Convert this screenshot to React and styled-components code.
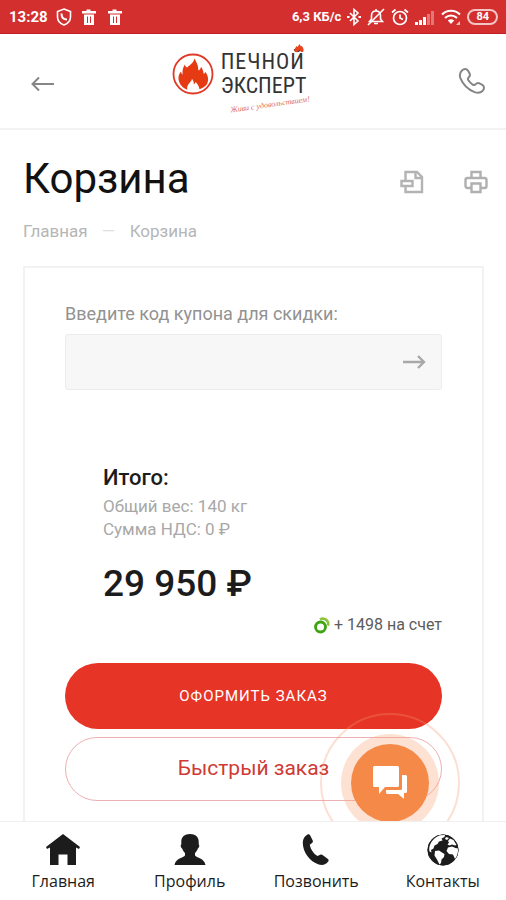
import { useState } from "react";
import styled, { createGlobalStyle } from "styled-components";

const tabs = [
  { id: "home", label: "Главная", Icon: HomeIcon },
  { id: "profile", label: "Профиль", Icon: PersonIcon },
  { id: "call", label: "Позвонить", Icon: CallIcon },
  { id: "contacts", label: "Контакты", Icon: GlobeIcon },
];

function App() {
  const [coupon, setCoupon] = useState("");

  return (
    <>
      <GlobalStyle />
      <Screen>
        <StatusBar />
        <Header>
          <IconButton type="button" aria-label="Назад">
            <svg width="23" height="20" viewBox="0 0 23 20" fill="none" stroke="#868686" strokeWidth="2">
              <path d="M23 13H1.500M8 6.500 1.500 13 8 19.500" />
            </svg>
          </IconButton>
          <Logo />
          <IconButton type="button" aria-label="Позвонить">
            <svg width="28" height="28" viewBox="0 0 28 28" fill="none" stroke="#858585" strokeWidth="2" strokeLinejoin="round">
              <path d="M4.200 3.200c2-1.900 4.600-1.600 5.900.5l1.400 2.500c.9 1.700.5 3-.7 4.100-1 .9-1.100 1.900-.4 3 1.100 1.800 2.500 3.200 4.300 4.300 1.100.7 2.100.6 3-.4 1.100-1.200 2.500-1.500 4.100-.7l2.500 1.400c2.100 1.300 2.300 3.800.5 5.800-2 2-4.900 2.600-8.200 1.400C10.200 22.700 4.900 17.400 2.400 11.200 1.300 8 2 5.200 4.200 3.200z" />
            </svg>
          </IconButton>
        </Header>

        <Viewport>
          <Main>
            <TitleRow>
              <Title>Корзина</Title>
              <Tools>
                <ToolButton type="button" aria-label="Скачать">
                  <svg width="24" height="24" viewBox="0 0 24 24" fill="none" stroke="#b3b3b3" strokeWidth="2.400">
                    <path d="M5.500 10V2H17l5 5v15H5.500v-5" />
                    <path d="M15.500 2v6H22" />
                    <path d="M1.500 11h11v5h-11z" />
                  </svg>
                </ToolButton>
                <ToolButton type="button" aria-label="Печать">
                  <svg width="24" height="24" viewBox="0 0 24 24" fill="none" stroke="#b0b0b0" strokeWidth="2.400">
                    <path d="M7.500 8V2h9v6" />
                    <path d="M7 18H3.500Q1.500 18 1.500 16V10Q1.500 8 3.500 8h17Q22.500 8 22.500 10v6q0 2-2 2H17" />
                    <path d="M7.500 13.500h9V22h-9z" />
                  </svg>
                </ToolButton>
              </Tools>
            </TitleRow>
            <Breadcrumbs aria-label="Навигация">
              <a href="#home">Главная</a>
              <Dash>—</Dash>
              <span>Корзина</span>
            </Breadcrumbs>

            <Card>
              <CouponForm onSubmit={(e) => e.preventDefault()}>
                <label htmlFor="coupon">Введите код купона для скидки:</label>
                <CouponField>
                  <input id="coupon" type="text" value={coupon} onChange={(e) => setCoupon(e.target.value)} />
                  <button type="submit" aria-label="Применить">
                    <svg width="24" height="16" viewBox="0 0 24 16" fill="none" stroke="#a8a8a8" strokeWidth="2.400">
                      <path d="M1 8h21M16 2l6 6-6 6" />
                    </svg>
                  </button>
                </CouponField>
              </CouponForm>

              <Summary>
                <h2>Итого:</h2>
                <p>Общий вес: 140 кг</p>
                <p>Сумма НДС: 0 ₽</p>
                <Total>29 950 ₽</Total>
              </Summary>

              <Bonus>
                <svg width="16" height="17" viewBox="0 0 16 17" fill="none">
                  <path d="M6 2.400C10.500 0 15.500 4 14 8.600" stroke="#8cc63f" strokeWidth="2.600" />
                  <circle cx="6.500" cy="10" r="5" stroke="#3fa412" strokeWidth="2.800" />
                </svg>
                + 1498 на счет
              </Bonus>

              <Actions>
                <PrimaryButton type="button">Оформить заказ</PrimaryButton>
                <OutlineButton type="button">Быстрый заказ</OutlineButton>
              </Actions>
            </Card>
          </Main>
          <ChatRing>
            <ChatButton type="button" aria-label="Чат">
              <svg width="34" height="34" viewBox="0 0 34 34" fill="#fff">
                <path d="M1.500 0h23q1.500 0 1.500 1.500v18q0 1.500-1.500 1.500H12l-6 7v-7H1.500Q0 21 0 19.500v-18Q0 0 1.500 0z" />
                <path d="M29 9h3.500Q34 9 34 10.500v15q0 1.500-1.500 1.500H31v6l-6-5H14.500q-1.500 0-1.500-1.500V24h14.500q1.500 0 1.500-1.500z" />
              </svg>
            </ChatButton>
          </ChatRing>
        </Viewport>

        <TabBar>
          {tabs.map(({ id, label, Icon }) => (
            <Tab key={id} href={`#${id}`}>
              <Icon />
              {label}
            </Tab>
          ))}
        </TabBar>
      </Screen>
    </>
  );
}

function StatusBar() {
  return (
    <Status>
      <StatusGroup $gap="8px">
        <Clock>13:28</Clock>
        <svg width="16" height="18" viewBox="0 0 16 18" fill="none" stroke="#fff" strokeWidth="1.600">
          <path d="M8 1l6.500 2.500V9c0 4-2.800 6.700-6.500 8-3.700-1.300-6.500-4-6.500-8V3.500z" />
          <path d="M5.500 5.500C5.500 9 7.500 11.500 11 11.500" strokeWidth="2" />
        </svg>
        <TrashIcon />
        <TrashIcon />
      </StatusGroup>
      <StatusGroup $gap="6px">
        <Speed>6,3 КБ/с</Speed>
        <svg width="14" height="18" viewBox="0 0 14 18" fill="none" stroke="#fff" strokeWidth="1.600">
          <path d="M3 5l8 8-4 3.500v-15L11 5l-8 8" />
          <path d="M0 9h2.500M11.500 9H14" strokeWidth="2" />
        </svg>
        <svg width="18" height="18" viewBox="0 0 18 18" fill="none" stroke="#fff" strokeWidth="1.600">
          <path d="M2.500 13.500h13L13.500 11V7.500c0-3-1.800-4.500-4.500-4.500S4.500 4.500 4.500 7.500V11z" />
          <path d="M7 15.500h4M1 17 17 1M9 1v2" />
        </svg>
        <svg width="18" height="18" viewBox="0 0 18 18" fill="none" stroke="#fff" strokeWidth="1.700">
          <circle cx="9" cy="10" r="6.500" />
          <path d="M1 4.500 4.500 1.500M17 4.500l-3.500-3M9 6.500V10l3 1.500" />
        </svg>
        <svg width="20" height="16" viewBox="0 0 20 16" fill="#fff">
          <path d="M0 13h3v3H0zM4 11h3v5H4zM8 8h3v8H8z" />
          <path d="M12 5h3v11h-3zM16 2h3v14h-3z" opacity=".35" />
        </svg>
        <svg width="20" height="16" viewBox="0 0 20 16" fill="none" stroke="#fff" strokeWidth="2">
          <path d="M1 5.500c5-5 13-5 18 0M4 9c3.500-3.500 8.500-3.500 12 0" />
          <path d="M6.800 11.500c2-1.800 4.400-1.800 6.400 0L10 15z" fill="#fff" stroke="none" />
          <path d="M15 16l4-4v4z" fill="#fff" stroke="none" opacity=".7" />
        </svg>
        <Battery>84</Battery>
      </StatusGroup>
    </Status>
  );
}

function TrashIcon() {
  return (
    <svg width="18" height="18" viewBox="0 0 18 18" fill="#fff">
      <path d="M2 3h4.500V1.500h4V3H16v2.500H2zM4 6.500h10V17H4zm3 2V15h1V8.500zm3 0V15h1V8.500z" fillRule="evenodd" />
    </svg>
  );
}

function Logo() {
  return (
    <LogoLink href="#home" aria-label="Печной эксперт">
      <svg width="42" height="42" viewBox="0 0 42 42">
        <circle cx="21" cy="21" r="19.500" fill="#fff" stroke="#df3a26" strokeWidth="1.800" />
        <path
          fill="#e63a12"
          d="M22.500 5.500c1 2 2.500 4.500 3.200 7 .7 2.300.3 3.800.9 5 1.300-.7 2.100-2.100 2.400-3.800 2 2.600 2.300 5 2.800 7.300.7-.3 1.400-1.200 1.600-2.200 2.500 3.500 3.300 7.200 2.300 10.500-1 3.500-4.200 5.700-8.200 7-.5-3.500-1.800-5-4-7.300-.3 1.200-1 1.900-1.800 2.200.2-2-.2-3.500-1.700-5.500-.3 2-1.800 3.300-3 4.900-1.600 2.200-2.200 3.600-1.700 6.100C10.500 35 7 31 6.500 26c-.2-2.700.6-5.300 2.500-7.500.2 1.500.7 2.400 1.600 2.900-.3-3.400.2-6.800 2.200-9.900.4 1.500 1.200 2.500 2.200 3 2.700-2.600 6.500-4.500 7.500-9z"
        />
      </svg>
      <LogoText>
        <LogoLine $spaced>ПЕЧНОЙ</LogoLine>
        <LogoLine>ЭКСПЕРТ</LogoLine>
        <Flame width="10" height="8" viewBox="0 0 10 8">
          <path d="M1 8C-.500 5 2 3.500 2.500 2l1 1L5.500 0l1.500 2.500.7-.8C9 3.500 10.500 6 9 8L7 8 5.500 5.500 3.500 8z" fill="#e8431c" />
        </Flame>
        <Slogan>Живи с удовольствием!</Slogan>
      </LogoText>
    </LogoLink>
  );
}

function HomeIcon() {
  return (
    <svg width="34" height="32" viewBox="0 0 34 32" fill="#1c1c1c">
      <path d="M17 0 34 13l-1 2-3-1.500V31H21.500V20.500h-9V31H4V13.500L1 15l-1-2z" />
    </svg>
  );
}

function PersonIcon() {
  return (
    <svg width="32" height="32" viewBox="0 0 32 32" fill="#1c1c1c">
      <path d="M16 0c5.500 0 8.700 3 8.700 7.500v2.700c1.200.8.500 3.800-1 4.500-.7 2-1.700 3.300-2.700 4.300v2.500c1.300 2.300 9.500 2.500 10.500 9.500H.500C1.500 24 9.700 23.800 11 21.500V19c-1-1-2-2.300-2.700-4.300-1.500-.7-2.200-3.700-1-4.500V7.500C7.300 3 10.500 0 16 0z" />
    </svg>
  );
}

function CallIcon() {
  return (
    <svg width="32" height="32" viewBox="0 0 32 32" fill="#1c1c1c">
      <path d="M7.500.500c1-.7 2-.3 2.600.7l2.600 5.300c.5 1.100.2 1.900-.7 2.500l-2.200 1.700c.6 4.200 3.700 9 7.700 11.300l2.700-1.200c1-.5 1.800-.3 2.700.4l5 3.700c1 .8 1 1.700.3 2.600-2 3-5.700 4.200-9.500 3C9.500 27.700 2.500 17.500 2.800 8.500 2.900 5 4.500 2 7.500.500z" />
    </svg>
  );
}

function GlobeIcon() {
  return (
    <svg width="32" height="32" viewBox="0 0 32 32">
      <circle cx="16" cy="16" r="15.200" fill="#1c1c1c" stroke="#1c1c1c" />
      <path
        fill="#fff"
        d="M13 1.300l5-.3-.5 2-3 1.500 1 2-3.500 1-1.500 2.500-3 1.500-1 3-2.500 1.500.5 2.500-2-1C1 11.500 5.500 4 13 1.300zM8 17l4-.500 3 2 2.500 1.500-.5 3-2.500 2.500-.5 3.500-1.500 1.500-2.500-5-2.500-4zM23 4.500l3.500 1.500 3 5-1.500.5-3-1-2.500 1-2-1 1.500-2-1-1.500zM21 13.500l4-1 3.500 1.500 2.500.5c.2 4-.8 7.500-3 10.500l-2-4.500-4-.5-2.500-3z"
      />
      <path fill="#fff" d="M19 3l3 1-2 2-2-1z" />
    </svg>
  );
}

export default App;

const GlobalStyle = createGlobalStyle`
  * { box-sizing: border-box; }
  body {
    margin: 0;
    background: #fff;
    color: #1c1c1c;
    font-family: Roboto, "Liberation Sans", sans-serif;
  }
  button {
    padding: 0;
    border: 0;
    background: none;
    font-family: inherit;
    cursor: pointer;
  }
  a { color: inherit; text-decoration: none; }
  svg { display: block; flex: none; }
`;

const Screen = styled.div`
  display: flex;
  flex-direction: column;
  height: 100vh;
`;

const Status = styled.div`
  display: flex;
  justify-content: space-between;
  align-items: center;
  height: 34px;
  padding: 0 8px 0 9px;
  background: #d32f2f;
  border-bottom: 1px solid #c01f1f;
  color: #fff;
`;

const StatusGroup = styled.div`
  display: flex;
  align-items: center;
  gap: ${(props) => props.$gap};
`;

const Clock = styled.span`
  font-size: 15px;
  font-weight: 700;
`;

const Speed = styled.span`
  font-size: 13px;
  font-weight: 700;
`;

const Battery = styled.span`
  padding: 0 7px;
  border: 2px solid #f3c4c4;
  border-radius: 8px;
  font-size: 11px;
  line-height: 12px;
  font-weight: 700;
`;

const Header = styled.header`
  display: flex;
  justify-content: space-between;
  align-items: center;
  height: 96px;
  padding: 0 20px 0 31px;
  border-bottom: 2px solid #f2f2f2;
`;

const IconButton = styled.button`
  display: flex;
`;

const LogoLink = styled.a`
  display: flex;
  align-items: center;
  gap: 7px;
  padding: 0 34px 14px 0;
`;

const LogoText = styled.span`
  position: relative;
  display: flex;
  flex-direction: column;
  font-family: "Roboto Condensed", "Liberation Sans Narrow", "DejaVu Sans Condensed", sans-serif;
  font-size: 22px;
  line-height: 24px;
  color: #333;
`;

const LogoLine = styled.span`
  letter-spacing: ${(props) => (props.$spaced ? "1px" : "normal")};
`;

const Flame = styled.svg`
  position: absolute;
  top: -6px;
  right: 2px;
`;

const Slogan = styled.small`
  position: absolute;
  top: 51px;
  right: -4px;
  font-family: "Liberation Serif", serif;
  font-style: italic;
  font-size: 8px;
  line-height: 8px;
  white-space: nowrap;
  color: #e0705a;
  transform: rotate(-8deg);
`;

const Viewport = styled.div`
  position: relative;
  flex: 1;
  min-height: 0;
  overflow: hidden;
`;

const Main = styled.main`
  height: 100%;
  overflow: hidden;
  padding: 24px 22px 0 23px;
`;

const TitleRow = styled.div`
  display: flex;
  justify-content: space-between;
  align-items: center;
  margin-right: -4px;
`;

const Title = styled.h1`
  margin: 0;
  font-size: 42px;
  line-height: 50px;
  font-weight: 400;
  color: #111;
`;

const Tools = styled.div`
  display: flex;
  gap: 40px;
  padding-top: 6px;
`;

const ToolButton = styled.button`
  display: flex;
`;

const Breadcrumbs = styled.nav`
  display: flex;
  gap: 14px;
  margin-top: 16px;
  font-size: 17px;
  line-height: 22px;
  color: #b6b6b6;
`;

const Dash = styled.span`
  width: 14px;
  overflow: hidden;
  color: #dedede;
`;

const Card = styled.section`
  margin-top: 24px;
  padding: 34px 40px 40px;
  border: 2px solid #f2f2f2;
`;

const CouponForm = styled.form`
  label {
    display: block;
    font-size: 18px;
    line-height: 24px;
    color: #929292;
  }
`;

const CouponField = styled.div`
  display: flex;
  align-items: center;
  height: 56px;
  margin-top: 8px;
  padding-right: 15px;
  background: #f7f7f7;
  border: 1px solid #ececec;
  border-radius: 3px;

  input {
    flex: 1;
    min-width: 0;
    height: 100%;
    padding: 0 16px;
    border: 0;
    outline: 0;
    background: none;
    font: inherit;
    font-size: 18px;
  }
`;

const Summary = styled.div`
  margin: 74px 0 0 38px;

  h2 {
    margin: 0 0 3px;
    font-size: 22px;
    line-height: 28px;
    font-weight: 500;
  }

  p {
    margin: 0;
    font-size: 17px;
    line-height: 23px;
    color: #a8a8a8;
  }
`;

const Total = styled.strong`
  display: block;
  margin-top: 20px;
  font-size: 37px;
  line-height: 46px;
  font-weight: 500;
`;

const Bonus = styled.div`
  display: flex;
  justify-content: flex-end;
  align-items: center;
  gap: 4px;
  margin-top: 7px;
  font-size: 16px;
  line-height: 22px;
  color: #5c5c5c;
`;

const Actions = styled.div`
  display: flex;
  flex-direction: column;
  gap: 8px;
  margin-top: 27px;
`;

const PrimaryButton = styled.button`
  height: 66px;
  border-radius: 33px;
  background: #e63527;
  color: #fff;
  font-size: 15px;
  letter-spacing: 1px;
  text-transform: uppercase;
`;

const OutlineButton = styled.button`
  height: 64px;
  padding-bottom: 2px;
  border: 1px solid #eeb0b2;
  border-radius: 32px;
  font-size: 21px;
  color: #cf3a34;
`;

const ChatRing = styled.div`
  position: absolute;
  right: 46px;
  bottom: -32px;
  display: grid;
  place-items: center;
  width: 140px;
  height: 140px;
  border: 2px solid rgba(246, 150, 110, 0.3);
  border-radius: 50%;
`;

const ChatButton = styled.button`
  display: grid;
  place-items: center;
  width: 78px;
  height: 78px;
  border-radius: 50%;
  background: #f58a48;
  box-shadow: 0 0 0 10px rgba(248, 170, 130, 0.35);
`;

const TabBar = styled.nav`
  display: grid;
  grid-template-columns: repeat(4, 1fr);
  height: 79px;
  border-top: 1px solid #efefef;
  background: #fff;
`;

const Tab = styled.a`
  display: flex;
  flex-direction: column;
  align-items: center;
  gap: 4px;
  padding-top: 12px;
  font-family: "Open Sans", "Noto Sans", sans-serif;
  font-size: 16px;
  line-height: 22px;
`;
